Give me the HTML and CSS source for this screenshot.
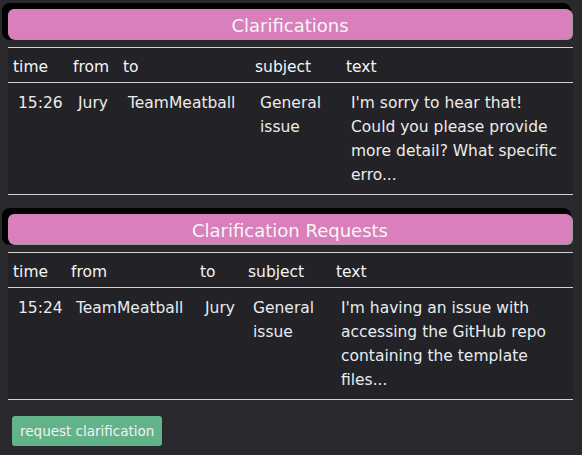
FILE: index.html
```html
<!DOCTYPE html>
<html>
<head>
<meta charset="utf-8">
<link rel="stylesheet" href="styles.css">
</head>
<body>
<div class="page">
  <section class="panel">
    <div class="panel-head"><h2 class="title">Clarifications</h2></div>
    <table class="grid">
      <colgroup><col class="c60"><col class="c50"><col class="c132"><col class="c91"><col></colgroup>
      <thead>
        <tr><th>time</th><th>from</th><th>to</th><th>subject</th><th>text</th></tr>
      </thead>
      <tbody>
        <tr>
          <td class="nw">15:26</td><td class="nw">Jury</td><td class="nw">TeamMeatball</td><td>General issue</td>
          <td>I'm sorry to hear that! Could you please provide more detail? What specific erro...</td>
        </tr>
      </tbody>
    </table>
  </section>
  <section class="panel">
    <div class="panel-head"><h2 class="title">Clarification Requests</h2></div>
    <table class="grid">
      <colgroup><col class="c58"><col class="c129"><col class="c48"><col class="c88"><col></colgroup>
      <thead>
        <tr><th>time</th><th>from</th><th>to</th><th>subject</th><th>text</th></tr>
      </thead>
      <tbody>
        <tr class="mine">
          <td class="nw">15:24</td><td class="nw">TeamMeatball</td><td class="nw">Jury</td><td>General issue</td>
          <td>I'm having an issue with accessing the GitHub repo containing the template files...</td>
        </tr>
      </tbody>
    </table>
  </section>
  <button class="btn">request clarification</button>
</div>
</body>
</html>
```
FILE: styles.css
```css
html, body {
  margin: 0;
  padding: 0;
  background: #29282c;
}
body {
  font-family: "DejaVu Sans", sans-serif;
  color: #f0f0f0;
  font-size: 15.5px;
  line-height: 24px;
}
.page {
  padding: 3px 9px 0 2px;
}
.panel {
  margin-bottom: 13px;
}
.panel-head {
  background: #000;
  border-radius: 8px;
  padding: 6px 0 1px 6px;
  margin-right: 2px;
}
.title {
  margin: 0 -1px 0 0;
  height: 28px;
  padding-top: 2px;
  line-height: 30px;
  background: #d97fbb;
  border-radius: 6px;
  box-shadow: 1px 1px 0 #9d9d9d;
  text-align: center;
  font-weight: normal;
  font-size: 18px;
  color: #f6f6f6;
}
.grid {
  margin: 7px 0 0 6px;
  width: 565px;
  border-collapse: collapse;
  table-layout: fixed;
  background: #232226;
}
.grid thead tr {
  border-top: 1px solid #d2d2d2;
  border-bottom: 1px solid #d2d2d2;
}
.grid tbody tr {
  border-bottom: 1px solid #d2d2d2;
}
.grid th {
  text-align: left;
  font-weight: normal;
  padding: 7px 5px 3px 5px;
  color: #f4f4f4;
  white-space: nowrap;
}
.grid td {
  padding: 8px 10px 7px 10px;
  vertical-align: top;
  color: #ececec;
}
.grid .mine td {
  color: #e6ecf2;
}
.nw {
  white-space: nowrap;
}
.c60 { width: 60px; }
.c50 { width: 50px; }
.c132 { width: 132px; }
.c91 { width: 91px; }
.c58 { width: 58px; }
.c129 { width: 129px; }
.c48 { width: 48px; }
.c88 { width: 88px; }
.btn {
  margin: 3px 0 0 10px;
  height: 30px;
  padding: 0 8px;
  border: none;
  border-radius: 3px;
  background: #63b38a;
  color: #f2f2f2;
  font-family: "DejaVu Sans", sans-serif;
  font-size: 13.5px;
}
```
